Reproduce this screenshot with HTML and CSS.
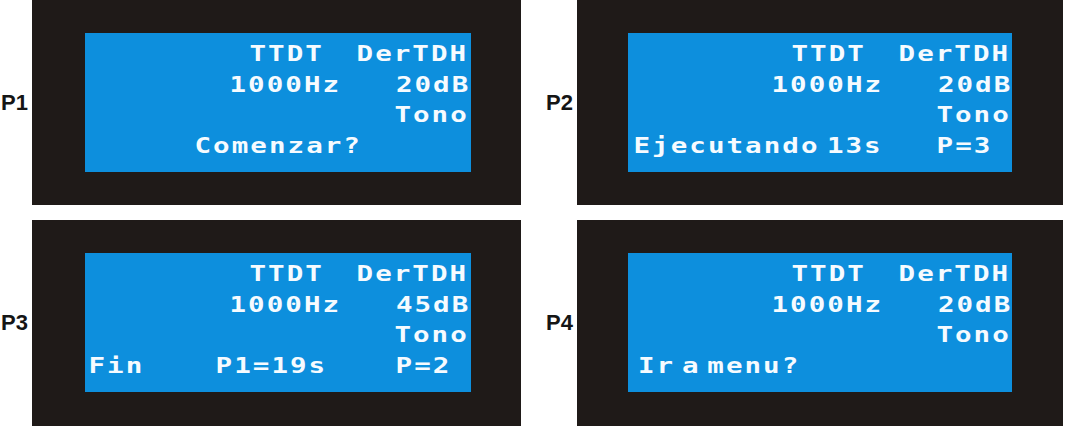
FILE: index.html
```html
<!DOCTYPE html>
<html lang="es">
<head>
<meta charset="utf-8">
<title>Pantallas LCD</title>
<link rel="stylesheet" href="styles.css">
</head>
<body>
<div class="board">
  <div class="label left">P1</div>
  <div class="frame first">
    <div class="lcd">
      <div class="txt">
        <div class="ln"><span class="r1a">TTDT</span><span class="r1b">DerTDH</span></div>
        <div class="ln"><span class="r2a">1000Hz</span><span class="r2b">20dB</span></div>
        <div class="ln"><span class="r3">Tono</span></div>
        <div class="ln"><span class="p1a">Comenzar?</span></div>
      </div>
    </div>
  </div>

  <div class="label right">P2</div>
  <div class="frame second">
    <div class="lcd">
      <div class="txt">
        <div class="ln"><span class="r1a">TTDT</span><span class="r1b">DerTDH</span></div>
        <div class="ln"><span class="r2a">1000Hz</span><span class="r2b">20dB</span></div>
        <div class="ln"><span class="r3">Tono</span></div>
        <div class="ln"><span class="p2a">Ejecutando 13s</span><span class="p2b">P=3</span></div>
      </div>
    </div>
  </div>

  <div class="label left">P3</div>
  <div class="frame first">
    <div class="lcd">
      <div class="txt">
        <div class="ln"><span class="r1a">TTDT</span><span class="r1b">DerTDH</span></div>
        <div class="ln"><span class="r2a">1000Hz</span><span class="r2b">45dB</span></div>
        <div class="ln"><span class="r3">Tono</span></div>
        <div class="ln"><span class="p3a">Fin</span><span class="p3b">P1=19s</span><span class="p3c">P=2</span></div>
      </div>
    </div>
  </div>

  <div class="label right">P4</div>
  <div class="frame second">
    <div class="lcd">
      <div class="txt">
        <div class="ln"><span class="r1a">TTDT</span><span class="r1b">DerTDH</span></div>
        <div class="ln"><span class="r2a">1000Hz</span><span class="r2b">20dB</span></div>
        <div class="ln"><span class="r3">Tono</span></div>
        <div class="ln"><span class="p4a">Ir a menu?</span></div>
      </div>
    </div>
  </div>
</div>
</body>
</html>
```
FILE: styles.css
```css
html, body {
  margin: 0;
  padding: 0;
  background: #ffffff;
}

.board {
  display: grid;
  grid-template-columns: 32px 489px 56px 486px;
  grid-template-rows: 205px 206px;
  row-gap: 15px;
  width: 1065px;
  height: 426px;
  overflow: hidden;
}

.label {
  display: flex;
  align-items: center;
  font-family: "Liberation Sans", Arial, sans-serif;
  font-weight: bold;
  font-size: 22px;
  color: #151515;
}

.label.left {
  justify-content: flex-start;
  padding-left: 1px;
}

.label.right {
  justify-content: flex-end;
  padding-right: 4px;
}

.frame {
  background: #1f1a18;
  padding-top: 33px;
}

.frame.first {
  padding-left: 53px;
  padding-right: 50px;
}

.frame.second {
  padding-left: 51px;
  padding-right: 51px;
}

.lcd {
  background: #0d8fdd;
  height: 139px;
  overflow: hidden;
}

.txt {
  transform: scaleX(1.25);
  transform-origin: 0 0;
  padding-top: 6px;
  font-family: "DejaVu Sans Mono", "Liberation Mono", monospace;
  font-weight: bold;
  font-size: 22px;
  line-height: 30.5px;
  letter-spacing: 1.64px;
  color: #f6fbff;
}

.frame.second .txt {
  margin-left: -1.5px;
}

.ln {
  display: flex;
  height: 30.5px;
}

.ln span {
  white-space: pre;
  flex: none;
}

/* row 1 */
.r1a { margin-left: 131.6px; }
.r1b { margin-left: 26.1px; }

/* row 2 */
.r2a { margin-left: 115.6px; }
.r2b { margin-left: 43.8px; }

/* row 3 */
.r3 { margin-left: 247.5px; }

/* row 4 variants */
.p1a { margin-left: 87.6px; }

.p2a { margin-left: 5.2px; word-spacing: -9px; }
.p2b { margin-left: 43.1px; }

.p3a { margin-left: 2.8px; }
.p3b { margin-left: 57px; }
.p3c { margin-left: 54.7px; }

.p4a { margin-left: 8.8px; word-spacing: -9.5px; }
```
